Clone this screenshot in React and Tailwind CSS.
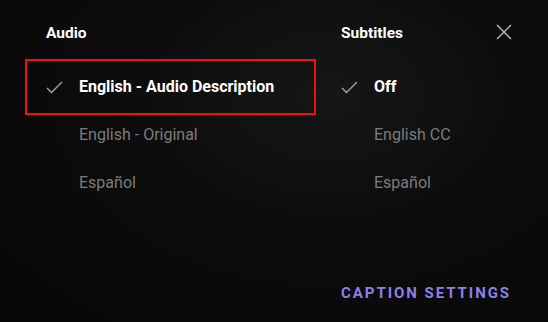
import React from 'react';

// ─── Options ──────────────────────────────────────────────────────────────────
const AUDIO = ['English - Audio Description', 'English - Original', 'Español'];
const SUBTITLES = ['Off', 'English CC', 'Español'];

function Check() {
    return (
        <svg width="17" height="13" viewBox="0 0 17 13" fill="none" className="shrink-0">
            <path d="M1 7 L5.5 11.5 L16 1" stroke="#a3a3a3" strokeWidth="1.4" />
        </svg>
    );
}

function Option({ label, selected, boxed }) {
    return (
        <div className={`flex items-center ${boxed ? 'h-[56px] -my-[4px] -ml-[21px] pl-[19px] w-[291px] border-2 border-[#ee0f17]' : 'h-[48px]'}`}>
            <div className="w-[33px]">{selected && <Check />}</div>
            <span className={selected ? 'text-white font-bold text-[16px]' : 'text-[#7c7c7c] text-[16px]'}>{label}</span>
        </div>
    );
}

function Column({ title, options, boxed, className }) {
    return (
        <div className={className}>
            <div className="h-[63px] pt-[26px]">
                <h3 className="text-white font-bold text-[15.5px] leading-none">{title}</h3>
            </div>
            <div className="flex flex-col">
                {options.map((o, i) => (
                    <Option key={o} label={o} selected={i === 0} boxed={boxed && i === 0} />
                ))}
            </div>
        </div>
    );
}

export default function App() {
    return (
        <div
            className="relative w-[548px] h-[322px] overflow-hidden bg-[#0a0a0a] bg-[radial-gradient(ellipse_at_60%_30%,#161616_0%,#0c0c0c_45%,#070707_100%)]"
            style={{ fontFamily: 'Roboto, "Liberation Sans", sans-serif' }}
        >
            <div className="flex">
                <Column title="Audio" options={AUDIO} boxed className="pl-[46px] w-[341px]" />
                <Column title="Subtitles" options={SUBTITLES} />
            </div>
            <button className="absolute left-[495px] top-[23px] w-[18px] h-[18px]">
                <svg viewBox="0 0 18 18" width="18" height="18" fill="none">
                    <path d="M2 2 L16 16 M16 2 L2 16" stroke="#bdbdbd" strokeWidth="1.4" />
                </svg>
            </button>
            <button className="absolute left-[341px] top-[286px] text-[#8e80e6] font-bold text-[15px] tracking-[0.13em] leading-none">
                CAPTION SETTINGS
            </button>
        </div>
    );
}
